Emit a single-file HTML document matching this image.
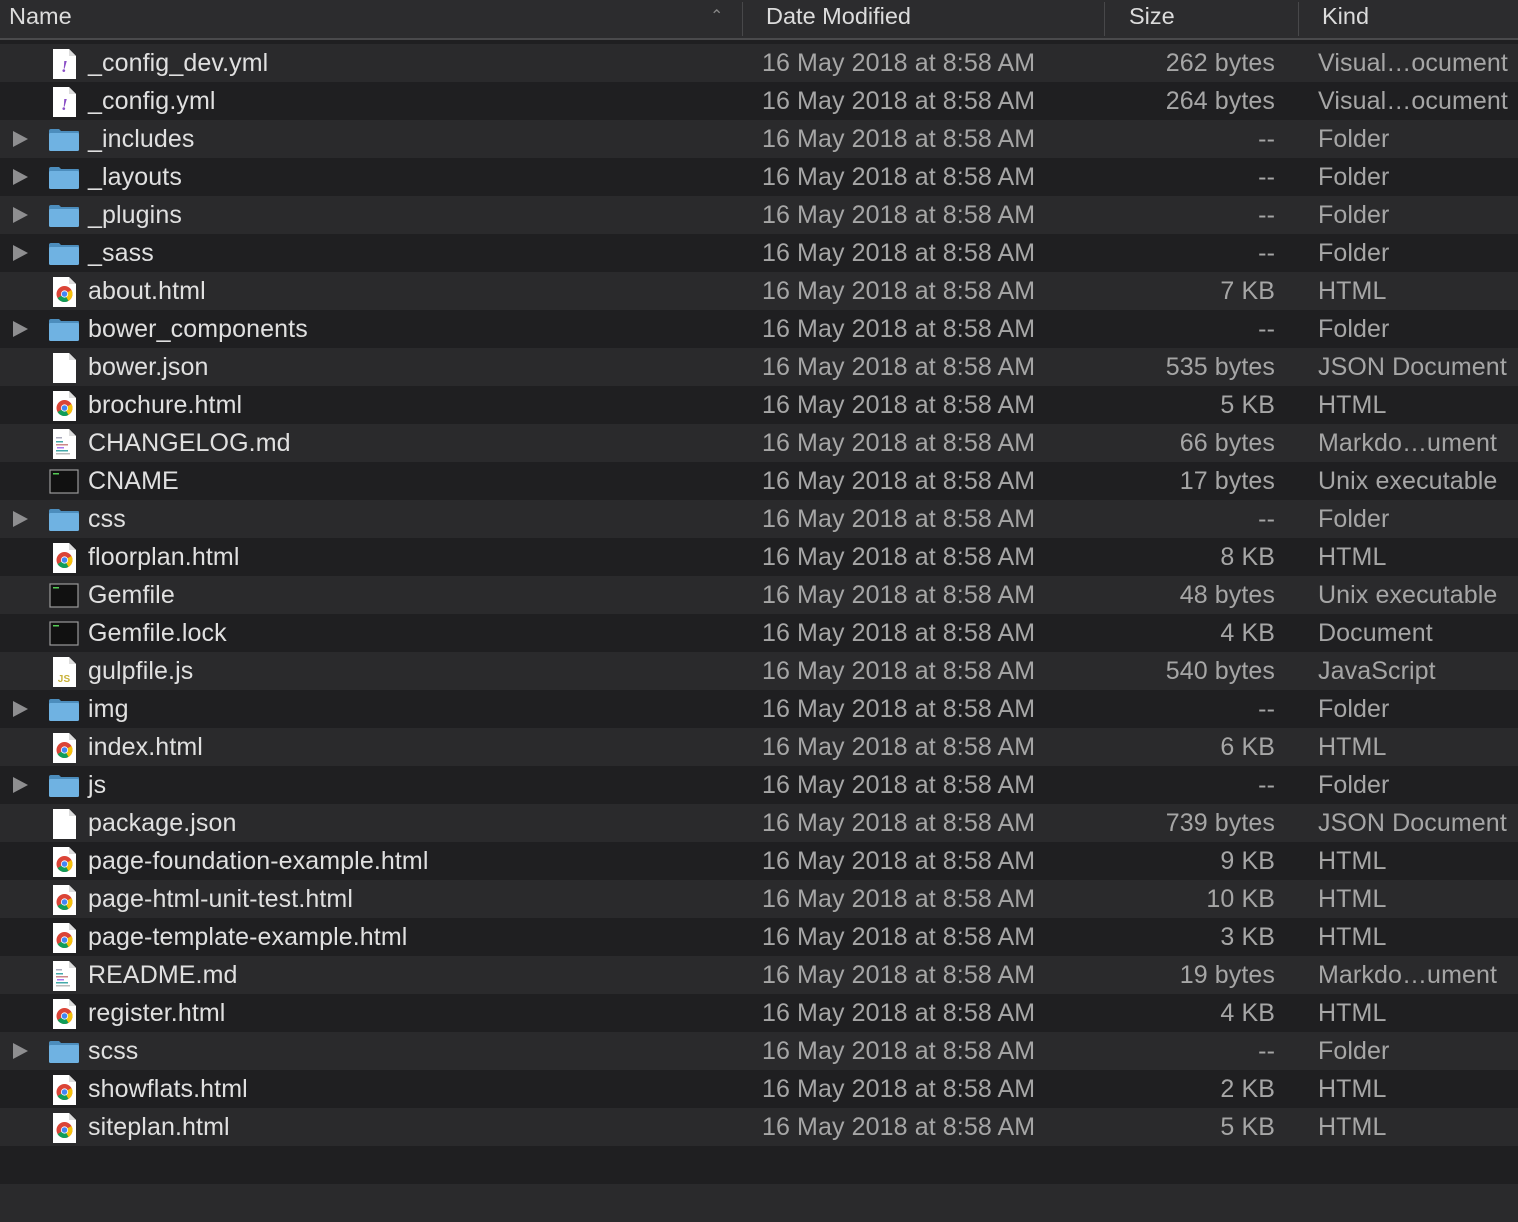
<!DOCTYPE html>
<html><head><meta charset="utf-8"><style>
body{margin:0;width:1518px;height:1198px;background:#1f1f21;overflow:hidden;font-family:"Liberation Sans",sans-serif;position:relative}
.hdr{position:absolute;left:0;top:0;width:1518px;height:38px;background:#2c2c2e;border-bottom:2px solid #4a4a4c;color:#dcdcdc;font-size:23.5px}
.hdr span{position:absolute;top:3px}
.div{position:absolute;top:2px;width:1px;height:34px;background:#48484a}
.row{position:absolute;left:0;width:1518px;height:38px;font-size:25px;letter-spacing:0.1px}
.l{background:#2a2a2c}.d{background:#1f1f21}
.n{position:absolute;left:88px;top:5px;color:#e0e0e0;white-space:nowrap}
.dt{position:absolute;left:762px;top:5px;color:#a6a6a6}
.sz{position:absolute;right:243px;top:5px;color:#a6a6a6}
.k{position:absolute;left:1318px;top:5px;color:#a6a6a6;white-space:nowrap}
.tri{position:absolute;left:13px;top:11px;width:0;height:0;border-left:15px solid #8e8e90;border-top:8.5px solid transparent;border-bottom:8.5px solid transparent}
svg.i{position:absolute;left:46px;top:3px}
</style></head><body>
<svg width="0" height="0" style="position:absolute">
<defs>
<symbol id="doc" viewBox="0 0 36 34"><path d="M7 2h16l7 7v23H7z" fill="#fff"/><path d="M23 2v7h7" fill="#ddd"/></symbol>
<symbol id="folder" viewBox="0 0 36 34"><path d="M3 8q0-2 2-2h8l2 2h17q1 0 1 1v2H3z" fill="#4c8dbd"/><rect x="3" y="10" width="30" height="18" rx="1.5" fill="#6fb2e2"/></symbol>
</defs></svg>
<div class="hdr"><span style="left:9px">Name</span><span style="left:710px;top:6px;font-size:16px;color:#888">&#8963;</span><div class="div" style="left:742px"></div><span style="left:766px">Date Modified</span><div class="div" style="left:1104px"></div><span style="left:1129px">Size</span><div class="div" style="left:1298px"></div><span style="left:1322px">Kind</span></div>
<div id="rows"></div>
<script>
var R=[
["_config_dev.yml","y","262 bytes","Visual…ocument"],
["_config.yml","y","264 bytes","Visual…ocument"],
["_includes","f","--","Folder"],
["_layouts","f","--","Folder"],
["_plugins","f","--","Folder"],
["_sass","f","--","Folder"],
["about.html","c","7 KB","HTML"],
["bower_components","f","--","Folder"],
["bower.json","b","535 bytes","JSON Document"],
["brochure.html","c","5 KB","HTML"],
["CHANGELOG.md","m","66 bytes","Markdo…ument"],
["CNAME","t","17 bytes","Unix executable"],
["css","f","--","Folder"],
["floorplan.html","c","8 KB","HTML"],
["Gemfile","t","48 bytes","Unix executable"],
["Gemfile.lock","t","4 KB","Document"],
["gulpfile.js","j","540 bytes","JavaScript"],
["img","f","--","Folder"],
["index.html","c","6 KB","HTML"],
["js","f","--","Folder"],
["package.json","b","739 bytes","JSON Document"],
["page-foundation-example.html","c","9 KB","HTML"],
["page-html-unit-test.html","c","10 KB","HTML"],
["page-template-example.html","c","3 KB","HTML"],
["README.md","m","19 bytes","Markdo…ument"],
["register.html","c","4 KB","HTML"],
["scss","f","--","Folder"],
["showflats.html","c","2 KB","HTML"],
["siteplan.html","c","5 KB","HTML"]];
function icon(t){
 var s='<svg class="i" width="36" height="34" viewBox="0 0 36 34">';
 if(t=="f"){s+='<use href="#folder"/>';}
 else if(t=="t"){s+='<rect x="4" y="5" width="28" height="23" fill="#111" stroke="#9a9a9a" stroke-width="1.2"/><rect x="7" y="8" width="6" height="1.5" fill="#5c5"/>';}
 else{s+='<use href="#doc"/>';
  if(t=="y")s+='<text x="18.5" y="25" font-size="17" font-style="italic" font-weight="bold" fill="#8a4fc6" text-anchor="middle" font-family="Liberation Serif,serif">!</text>';
  if(t=="c")s+='<circle cx="18.5" cy="19" r="8" fill="#db4437"/><path d="M18.5 19L11.6 23A8 8 0 0 0 22.5 25.9z" fill="#0f9d58"/><path d="M18.5 19L22.5 25.9A8 8 0 0 0 25.4 15z" fill="#f4c20d"/><circle cx="18.5" cy="19" r="3.6" fill="#fff"/><circle cx="18.5" cy="19" r="2.8" fill="#4285f4"/>';
  if(t=="m")s+='<rect x="10" y="10" width="6" height="1.5" fill="#aab"/><rect x="10" y="14" width="7" height="1.5" fill="#4aa"/><rect x="10" y="17" width="12" height="1.5" fill="#c88"/><rect x="11" y="20" width="7" height="1.5" fill="#a7e"/><rect x="10" y="23" width="12" height="1.5" fill="#4aa"/><rect x="10" y="26" width="14" height="1.5" fill="#bbb"/>';
  if(t=="j")s+='<text x="18" y="27" font-size="10" font-weight="bold" fill="#c9b23a" text-anchor="middle" font-family="Liberation Sans,sans-serif">JS</text>';
 }
 return s+'</svg>';}
var h='';
for(var i=0;i<31;i++){var y=44+38*i;var c=i%2?'d':'l';
 if(i<R.length){var r=R[i];
  h+='<div class="row '+c+'" style="top:'+y+'px">'+(r[1]=="f"?'<div class="tri"></div>':'')+icon(r[1])+'<span class="n">'+r[0]+'</span><span class="dt">16 May 2018 at 8:58 AM</span><span class="sz">'+r[2]+'</span><span class="k">'+r[3]+'</span></div>';}
 else h+='<div class="row '+c+'" style="top:'+y+'px"></div>';}
document.getElementById('rows').innerHTML=h;
</script>
</body></html>
